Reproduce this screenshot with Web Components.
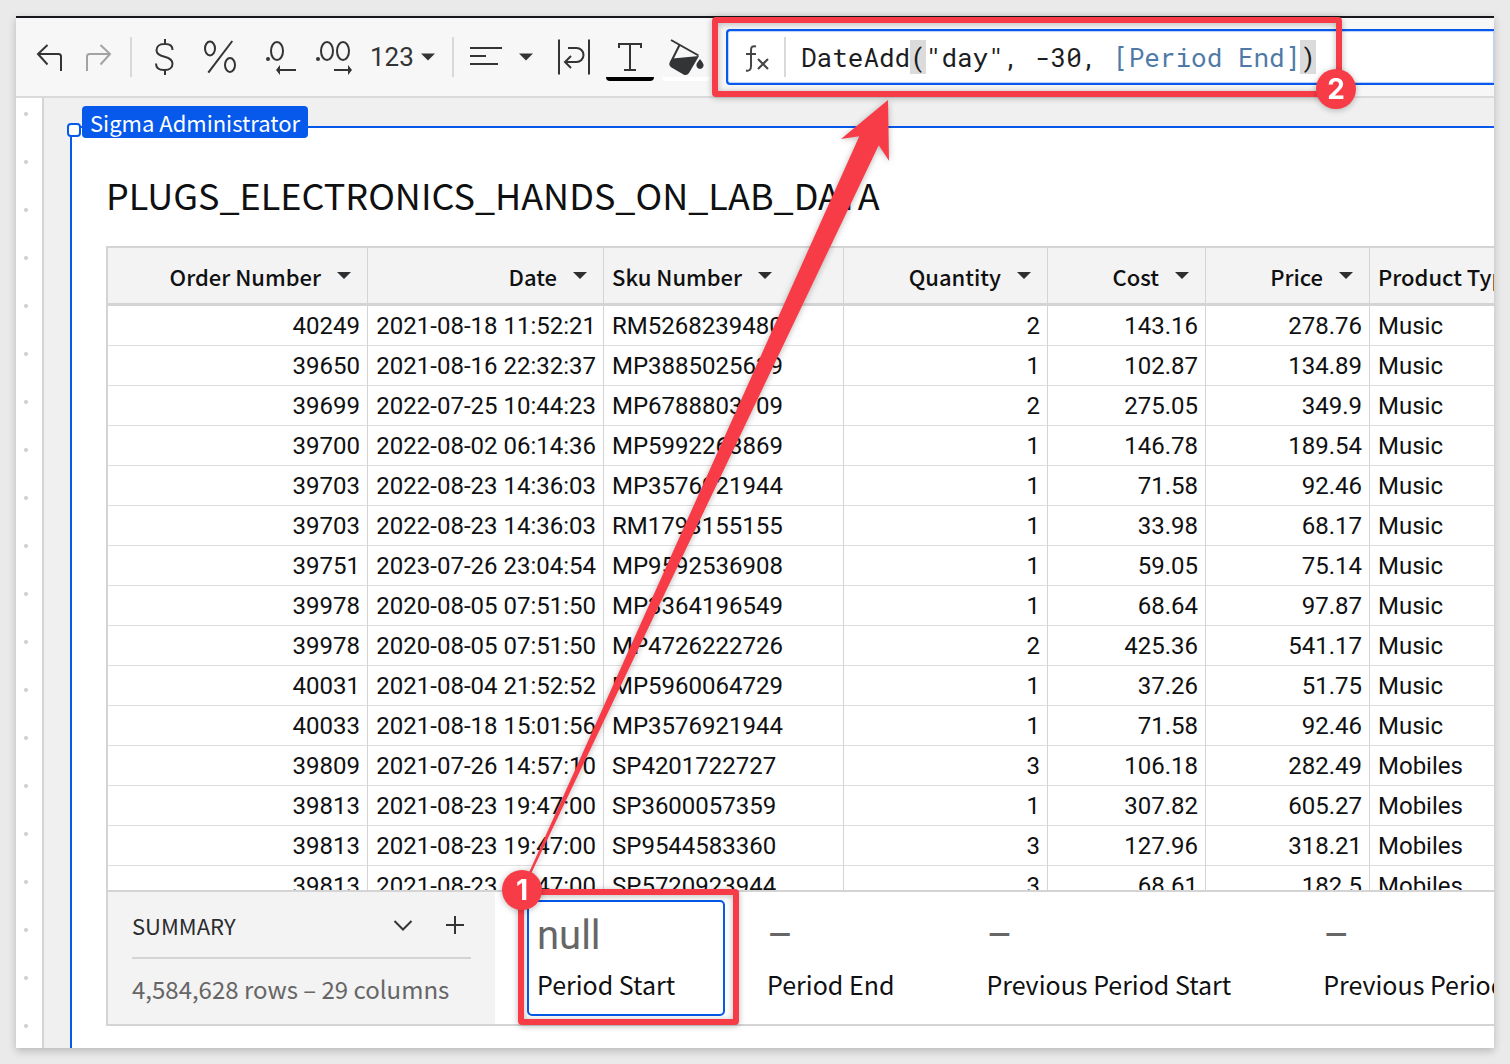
<!DOCTYPE html>
<html lang="en">
<head>
<meta charset="utf-8">
<title>Workbook – Period Start</title>
<style>
  :root {
    --blue: #0659ea;
    --line: #d4d4d4;
    --ink: #0f1011;
    --icon: #333436;
    --mark: #f83c47;
    --sans: "Source Sans Pro", "Noto Sans CJK SC", sans-serif;
    --data: Roboto, sans-serif;
    --code: "Roboto Mono", "DejaVu Sans Mono", monospace;
  }
  html, body { height: 100%; }
  body {
    margin: 0;
    padding: 16px;
    box-sizing: border-box;
    background: #eaeaea;
    color: var(--ink);
    font-family: var(--sans);
    overflow: hidden;
    position: relative;
  }
</style>
</head>
<body>
<app-frame>
  <tool-bar slot="bar"></tool-bar>
  <sheet-element label="Sigma Administrator" heading="PLUGS_ELECTRONICS_HANDS_ON_LAB_DATA">
    <data-grid></data-grid>
    <summary-bar rows="4,584,628 rows – 29 columns">
      <summary-item value="null" name="Period Start" selected></summary-item>
      <summary-item value="–" name="Period End"></summary-item>
      <summary-item value="–" name="Previous Period Start"></summary-item>
      <summary-item value="–" name="Previous Period End"></summary-item>
    </summary-bar>
  </sheet-element>
</app-frame>
<mark-layer></mark-layer>

<script>
const define = (name, html, setup) => {
  const template = document.createElement('template');
  template.innerHTML = html;
  customElements.define(name, class extends HTMLElement {
    connectedCallback() {
      if (this.shadowRoot) return;
      const root = this.attachShadow({ mode: 'open' });
      root.append(template.content.cloneNode(true));
      if (setup) setup(this, root);
    }
  });
};

define('app-frame', `
  <style>
    :host { display: flex; flex-direction: column; height: 100%; box-sizing: border-box;
      border-top: 2px solid #17181b; background: #f0f0f0; overflow: hidden;
      box-shadow: 0 3px 8px rgba(0,0,0,.22); }
    main { flex: 1; min-height: 0; display: flex; }
    .ruler { flex: none; width: 26px; border-right: 2px solid var(--line);
      background: #fff radial-gradient(circle at 10px 16px, #d2d2d2 1.6px, transparent 2.4px) 0 0 / 26px 48px; }
    .page { flex: 1; min-width: 0; display: flex; padding: 28px 0 0 26px; }
    ::slotted(sheet-element) { flex: 1; min-width: 0; }
  </style>
  <slot name="bar"></slot>
  <main><div class="ruler"></div><div class="page"><slot></slot></div></main>`);

define('tool-button', `
  <style>
    :host { display: block; flex: none; }
    button { all: unset; display: flex; align-items: center; height: 48px; cursor: pointer; color: inherit; }
  </style>
  <button type="button"><slot></slot></button>`,
  (el, root) => root.querySelector('button').setAttribute('aria-label', el.getAttribute('label') || ''));

define('tool-bar', `
  <style>
    :host { display: flex; align-items: center; gap: 8px; flex: none; height: 78px; padding-left: 10px;
      border-bottom: 2px solid #dadada; background: #f7f7f7; color: var(--icon); }
    .pair { display: flex; }
    .off { color: #a3a3a3; }
    hr { flex: none; width: 2px; height: 40px; margin: 0; border: 0; background: #d9d9d9; }
    svg { display: block; fill: none; stroke: currentColor; stroke-width: 2; }
    .solid { fill: currentColor; stroke: none; }
    .num { font: 26px/48px var(--data); padding-left: 6px; width: 51px; }
    formula-bar { flex: 1; min-width: 0; margin-left: 8px; }
  </style>
  <div class="pair">
    <tool-button label="Undo"><svg width="48" height="48"><path d="M21.5 12 12 21l9.500 10.500M12 21H32.500Q35 21 35 23.500V38"/></svg></tool-button>
    <tool-button label="Redo" class="off"><svg width="48" height="48"><path d="M26.500 12 36 21l-9.500 10.500M36 21H15.500Q13 21 13 23.500V38"/></svg></tool-button>
  </div>
  <hr>
  <tool-button label="Currency"><svg width="48" height="48"><path d="M32.500 17C32.500 13 29.500 11 25.500 11H24C19.500 11 16.500 13.500 16.500 17.200C16.500 21 19.500 22.600 24.500 23.800C29.500 25 32.500 27 32.500 30.800C32.500 34.500 29.500 37 25 37H24C19 37 16 34.500 16 30.500M25 6v5M25 37v5"/></svg></tool-button>
  <tool-button label="Percent"><svg width="48" height="48"><ellipse cx="14" cy="15.500" rx="5" ry="7"/><ellipse cx="34" cy="32" rx="5" ry="7"/><path d="M36.300 8 12.300 39.700"/></svg></tool-button>
  <tool-button label="Decrease decimal places"><svg width="48" height="48"><ellipse cx="25" cy="18" rx="6" ry="9"/><circle class="solid" cx="16" cy="26" r="2"/><path d="M27 37H44"/><path class="solid" d="M24 37l4-5v10z"/></svg></tool-button>
  <tool-button label="Increase decimal places"><svg width="48" height="48"><ellipse cx="19" cy="18" rx="6" ry="9"/><ellipse cx="35" cy="18" rx="6" ry="9"/><circle class="solid" cx="10" cy="26" r="2"/><path d="M26 37H41"/><path class="solid" d="M44 37l-4-5v10z"/></svg></tool-button>
  <tool-button label="Number format"><span class="num">123</span><svg width="23" height="48"><path class="solid" d="M0 20.500H14L7 27.500z"/></svg></tool-button>
  <hr>
  <tool-button label="Align text"><svg width="80" height="48"><path d="M8 15H40M8 23H24M8 31H36"/><path class="solid" d="M57 20.500H71L64 27.500z"/></svg></tool-button>
  <tool-button label="Wrap text"><svg width="48" height="48"><path d="M9 6.500v35M39 6.500v35M18 15h8.500a7 7 0 0 1 0 14H15.500M21 23l-6 6 6 6"/></svg></tool-button>
  <tool-button label="Text colour"><svg width="48" height="48"><path d="M13 15v-4h22v4M24 11v26M18 37h12"/><path d="M0 44h48q0 4-4 4H4q-4 0-4-4z" fill="#000" stroke="none"/></svg></tool-button>
  <tool-button label="Background colour"><svg width="48" height="48"><path d="M9 7 36.500 22.500M17.500 12 8.500 30"/><path class="solid" d="M10.500 25.500 37 23 27 40Q25 43 21.500 41.500L9.500 34.500Q6 32 8 29zM38 26Q34 31 34.500 31.500A3.600 3.600 0 1 0 41.500 31.500Q41 29.500 38 26z"/><path d="M0 44h48q0 4-4 4H4q-4 0-4-4z" fill="#fff" stroke="none"/></svg></tool-button>
  <formula-bar></formula-bar>`);

define('formula-bar', `
  <style>
    :host { display: flex; align-items: center; height: 52px; border: 2px solid var(--blue); border-right: 0;
      border-radius: 4px 0 0 4px; background: #fff; box-shadow: inset 0 0 1px 1px #b9cff8; }
    svg { flex: none; fill: none; stroke: #444; stroke-width: 2; }
    hr { flex: none; width: 2px; height: 40px; margin: 0 15px 0 0; border: 0; background: #d9d9d9; }
    .code { flex: 1; font: 26px/34px var(--code); white-space: pre; outline: 0; color: #1c1d1f; overflow: hidden; }
    .match { display: inline-block; background: #dbdbdb; }
    .ref { color: #4f7aa8; }
  </style>
  <svg width="56" height="40"><path d="M28 9.500Q23 8 23 13V29Q23 34.500 18 33.500M18 17h10"/><path d="M30 22 40 32M40 22 30 32"/></svg>
  <hr>
  <div class="code" role="textbox" contenteditable="true" spellcheck="false" aria-label="Formula">DateAdd<span class="match">(</span>"day", -30, <span class="ref">[Period End]</span><span class="match">)</span></div>`);

define('sheet-element', `
  <style>
    :host { display: flex; flex-direction: column; box-sizing: border-box; position: relative; background: #fff;
      border: 2px solid var(--blue); border-width: 2px 0 0 2px; padding: 0 0 22px 34px; }
    .handle { position: absolute; left: -5px; top: -5px; width: 10px; height: 10px; box-sizing: content-box;
      border: 2px solid var(--blue); border-radius: 4px; background: #fff; }
    .tag { position: absolute; left: 10px; top: -22px; padding: 0 8px; border-radius: 4px; background: var(--blue);
      color: #fff; font-size: 22px; line-height: 32px; white-space: nowrap; }
    h1 { flex: none; margin: 46px 0 32px; font-size: 36px; line-height: 40px; font-weight: 400; white-space: nowrap; }
    .box { flex: 1; min-height: 0; display: flex; flex-direction: column; border: 2px solid var(--line); border-right: 0; }
    ::slotted(data-grid) { flex: 1; min-height: 0; }
  </style>
  <div class="handle"></div><div class="tag"></div><h1></h1>
  <div class="box"><slot></slot></div>`,
  (el, root) => {
    root.querySelector('.tag').textContent = el.getAttribute('label');
    root.querySelector('h1').textContent = el.getAttribute('heading');
  });

const columns = [['Order Number', 260, 'r'], ['Date', 236, 'r'], ['Sku Number', 240, 'l'], ['Quantity', 204, 'r'],
  ['Cost', 158, 'r'], ['Price', 164, 'r'], ['Product Type', 240, 'l']];
const rows = `40249|2021-08-18 11:52:21|RM5268239480|2|143.16|278.76|Music
39650|2021-08-16 22:32:37|MP3885025639|1|102.87|134.89|Music
39699|2022-07-25 10:44:23|MP6788803709|2|275.05|349.9|Music
39700|2022-08-02 06:14:36|MP5992263869|1|146.78|189.54|Music
39703|2022-08-23 14:36:03|MP3576921944|1|71.58|92.46|Music
39703|2022-08-23 14:36:03|RM1793155155|1|33.98|68.17|Music
39751|2023-07-26 23:04:54|MP9592536908|1|59.05|75.14|Music
39978|2020-08-05 07:51:50|MP3364196549|1|68.64|97.87|Music
39978|2020-08-05 07:51:50|MP4726222726|2|425.36|541.17|Music
40031|2021-08-04 21:52:52|MP5960064729|1|37.26|51.75|Music
40033|2021-08-18 15:01:56|MP3576921944|1|71.58|92.46|Music
39809|2021-07-26 14:57:10|SP4201722727|3|106.18|282.49|Mobiles
39813|2021-08-23 19:47:00|SP3600057359|1|307.82|605.27|Mobiles
39813|2021-08-23 19:47:00|SP9544583360|3|127.96|318.21|Mobiles
39813|2021-08-23 19:47:00|SP5720923944|3|68.61|182.5|Mobiles`.split('\n').map(r => r.split('|'));

define('data-grid', `
  <style>
    :host { display: block; overflow: hidden; }
    table { width: max(100%, 1502px); table-layout: fixed; border-collapse: separate; border-spacing: 0; }
    th, td { box-sizing: border-box; padding: 0 7px 0 8px; border-right: 1px solid var(--line); white-space: nowrap; text-align: right; }
    .l { text-align: left; }
    th { height: 58px; background: #f3f3f3; border-bottom: 3px solid var(--line); font-size: 22px; line-height: 32px; font-weight: 500; }
    th.r { padding-right: 16px; }
    td { height: 40px; border-bottom: 1px solid #dedede; font: 24px/36px var(--data); }
    .head { display: inline-flex; align-items: center; gap: 16px; }
    button { all: unset; display: block; cursor: pointer; }
    svg { display: block; fill: #2c2e30; }
  </style>
  <table><colgroup></colgroup><thead><tr></tr></thead><tbody></tbody></table>`,
  (el, root) => {
    root.querySelector('colgroup').innerHTML = columns.map((c, i) =>
      i < columns.length - 1 ? `<col style="width:${c[1]}px">` : '<col>').join('');
    root.querySelector('thead tr').innerHTML = columns.map(([name, , side]) =>
      `<th scope="col" class="${side}"><span class="head"><span>${name}</span><button type="button" aria-label="${name} menu"><svg width="14" height="7"><path d="M0 0H14L7 7z"/></svg></button></span></th>`).join('');
    root.querySelector('tbody').innerHTML = rows.map(r =>
      '<tr>' + r.map((v, i) => `<td class="${columns[i][2]}">${v}</td>`).join('') + '</tr>').join('');
  });

define('summary-bar', `
  <style>
    :host { display: flex; flex: none; height: 132px; border-top: 2px solid var(--line); overflow: hidden; }
    .side { flex: none; width: 387px; box-sizing: border-box; padding: 0 24px; background: #f3f3f3; }
    header { display: flex; align-items: center; height: 65px; border-bottom: 2px solid var(--line); }
    h2 { flex: 1; margin: 0; font-size: 22px; line-height: 32px; font-weight: 400; color: #2b2c2e; }
    button { all: unset; display: block; cursor: pointer; }
    button + button { margin-left: 24px; }
    svg { display: block; fill: none; stroke: #333436; stroke-width: 2; }
    p { margin: 0; padding-top: 14px; font-size: 24px; line-height: 32px; color: #666; white-space: nowrap; }
    .items { flex: 1; min-width: 0; display: flex; gap: 32px; padding: 8px 0 8px 32px; overflow: hidden; }
  </style>
  <section class="side">
    <header><h2>SUMMARY</h2>
      <button type="button" aria-label="Collapse summary"><svg width="24" height="24"><path d="M3.500 8 12 16.500 20.500 8"/></svg></button>
      <button type="button" aria-label="Add summary"><svg width="32" height="24"><path d="M7 12H25M16 3V21"/></svg></button>
    </header>
    <p></p>
  </section>
  <div class="items"><slot></slot></div>`,
  (el, root) => root.querySelector('p').textContent = el.getAttribute('rows'));

define('summary-item', `
  <style>
    :host { display: block; flex: none; box-sizing: border-box; height: 116px; padding: 10px 48px 0 8px;
      border: 2px solid transparent; border-radius: 5px; white-space: nowrap; }
    :host([selected]) { border-color: var(--blue); background: #fff; }
    .value { font: 40px/48px var(--data); color: #666; }
    .name { margin-top: 8px; font-size: 25px; line-height: 32px; }
  </style>
  <div class="value"></div><div class="name"></div>`,
  (el, root) => {
    root.querySelector('.value').textContent = el.getAttribute('value');
    root.querySelector('.name').textContent = el.getAttribute('name');
  });

define('mark-layer', `
  <style>
    :host { position: absolute; inset: 0; pointer-events: none; overflow: hidden; }
    svg, .box, .badge { position: absolute; filter: drop-shadow(0 1px 3px rgba(0,0,0,.28)); }
    .box { box-sizing: border-box; border: 6px solid var(--mark); border-radius: 4px; }
    .badge { width: 40px; height: 40px; border-radius: 50%; background: var(--mark); color: #fff;
      font: 700 28px/40px Inter, sans-serif; text-align: center; }
    svg { left: 0; top: 0; fill: var(--mark); }
  </style>
  <div class="box" style="left:712px;top:17px;width:630px;height:80px"></div>
  <div class="box" style="left:518px;top:889px;width:221px;height:136px"></div>
  <svg width="1510" height="1064"><path d="M888 100 841 139 859.300 136.300 521 890.500 523 890.500 878.700 145.300 889 160.700z"/></svg>
  <div class="badge" style="left:1316px;top:69px">2</div>
  <div class="badge" style="left:502px;top:870px">1</div>`);
</script>
</body>
</html>
